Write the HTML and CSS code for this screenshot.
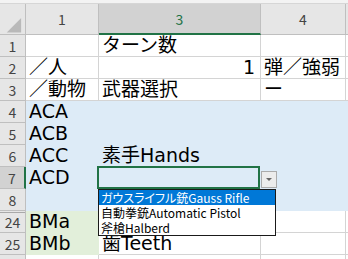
FILE: index.html
```html
<!DOCTYPE html>
<html>
<head>
    <title>Sheet</title>
    <link rel="stylesheet" href="styles.css">
</head>
<body>
    <div class="topbar"></div>
    <div class="sheet">
        <div class="corner">
            <svg width="26" height="31" viewBox="0 0 26 31"><polygon points="22,14 22,29 7,29" fill="#b9b9b9"/></svg>
        </div>
        <div class="colhead">1</div>
        <div class="colhead sel">3</div>
        <div class="colhead">4</div>
        <div class="colhead"></div>

        <div class="rowhead">1</div>
        <div class="cell"></div>
        <div class="cell">ターン数</div>
        <div class="cell"></div>
        <div class="cell"></div>

        <div class="rowhead">2</div>
        <div class="cell">／人</div>
        <div class="cell num">1</div>
        <div class="cell">弾／強弱</div>
        <div class="cell"></div>

        <div class="rowhead">3</div>
        <div class="cell">／動物</div>
        <div class="cell">武器選択</div>
        <div class="cell">ー</div>
        <div class="cell"></div>

        <div class="rowhead">4</div>
        <div class="cell blue">ACA</div>
        <div class="cell blue"></div>
        <div class="cell blue"></div>
        <div class="cell blue"></div>

        <div class="rowhead">5</div>
        <div class="cell blue">ACB</div>
        <div class="cell blue"></div>
        <div class="cell blue"></div>
        <div class="cell blue"></div>

        <div class="rowhead">6</div>
        <div class="cell blue">ACC</div>
        <div class="cell blue">素手Hands</div>
        <div class="cell blue"></div>
        <div class="cell blue"></div>

        <div class="rowhead sel">7</div>
        <div class="cell blue">ACD</div>
        <div class="cell blue active">
            <div class="drop-btn"><span class="arrow"></span></div>
            <div class="drop-list">
                <div class="item hl">ガウスライフル銃Gauss Rifle</div>
                <div class="item">自動拳銃Automatic Pistol</div>
                <div class="item">斧槍Halberd</div>
            </div>
        </div>
        <div class="cell blue"></div>
        <div class="cell blue"></div>

        <div class="rowhead hidden-below">8</div>
        <div class="cell blue"></div>
        <div class="cell blue"></div>
        <div class="cell blue"></div>
        <div class="cell blue"></div>

        <div class="rowhead hidden-above">24</div>
        <div class="cell green">BMa</div>
        <div class="cell"></div>
        <div class="cell"></div>
        <div class="cell"></div>

        <div class="rowhead">25</div>
        <div class="cell green">BMb</div>
        <div class="cell">歯Teeth</div>
        <div class="cell"></div>
        <div class="cell"></div>

        <div class="rowhead"></div>
        <div class="cell"></div>
        <div class="cell"></div>
        <div class="cell"></div>
        <div class="cell"></div>
    </div>
</body>
</html>
```

FILE: styles.css
```css
body {
    margin: 0;
    background-color: #ffffff;
    overflow: hidden;
    font-family: "DejaVu Sans", "Noto Sans CJK JP", sans-serif;
}

.topbar {
    height: 3px;
    background-color: #f3f3f3;
    border-bottom: 1px solid #d6d6d6;
}

.sheet {
    display: grid;
    grid-template-columns: 26px 73px 162px 85px 10px;
    grid-template-rows: 31px;
    grid-auto-rows: 22px;
}

.sheet > div {
    box-sizing: border-box;
    border-right: 1px solid #d4d4d4;
    border-bottom: 1px solid #d4d4d4;
}

.corner,
.colhead,
.rowhead {
    background-color: #e6e6e6;
    border-color: #bfbfbf !important;
    color: #444444;
    font-family: "Noto Sans CJK JP", sans-serif;
    font-size: 14px;
    display: flex;
    align-items: center;
    justify-content: center;
}

.colhead.sel {
    background-color: #d2d2d2;
    color: #217346;
    border-bottom: 2px solid #217346 !important;
}

.rowhead.sel {
    background-color: #d2d2d2;
    border-right: 2px solid #217346 !important;
}

.rowhead.hidden-above {
    box-shadow: inset 0 1px 0 #e6e6e6, inset 0 2px 0 #a9a9a9;
}

.cell {
    font-size: 19px;
    line-height: 21px;
    padding: 0 3px;
    white-space: nowrap;
    color: #000000;
}

.cell.num {
    text-align: right;
    padding-right: 5px;
}

.blue {
    background-color: #ddebf7;
    border-color: #ddebf7 !important;
}

.green {
    background-color: #e2efda;
    border-color: #e2efda !important;
}

.active {
    position: relative;
}

.active::after {
    content: "";
    position: absolute;
    left: -2px;
    top: -1px;
    right: 0;
    bottom: -1px;
    border: 2px solid #217346;
}

.drop-btn {
    position: absolute;
    left: 162px;
    top: 4px;
    width: 16px;
    height: 17px;
    box-sizing: border-box;
    background-color: #ececec;
    border: 1px solid #ababab;
    display: flex;
    align-items: center;
    justify-content: center;
}

.arrow {
    width: 0;
    height: 0;
    border-left: 3px solid transparent;
    border-right: 3px solid transparent;
    border-top: 3px solid #666666;
}

.drop-list {
    position: absolute;
    left: -1px;
    top: 22px;
    width: 178px;
    box-sizing: border-box;
    border: 1px solid #1a1a1a;
    background-color: #ffffff;
    z-index: 2;
    font-family: "Noto Sans CJK JP", sans-serif;
    font-size: 12px;
    font-feature-settings: "palt";
}

.item {
    height: 15px;
    line-height: 15px;
    padding-left: 2px;
    color: #000000;
}

.item.hl {
    background-color: #0078d7;
    color: #ffffff;
}
```
